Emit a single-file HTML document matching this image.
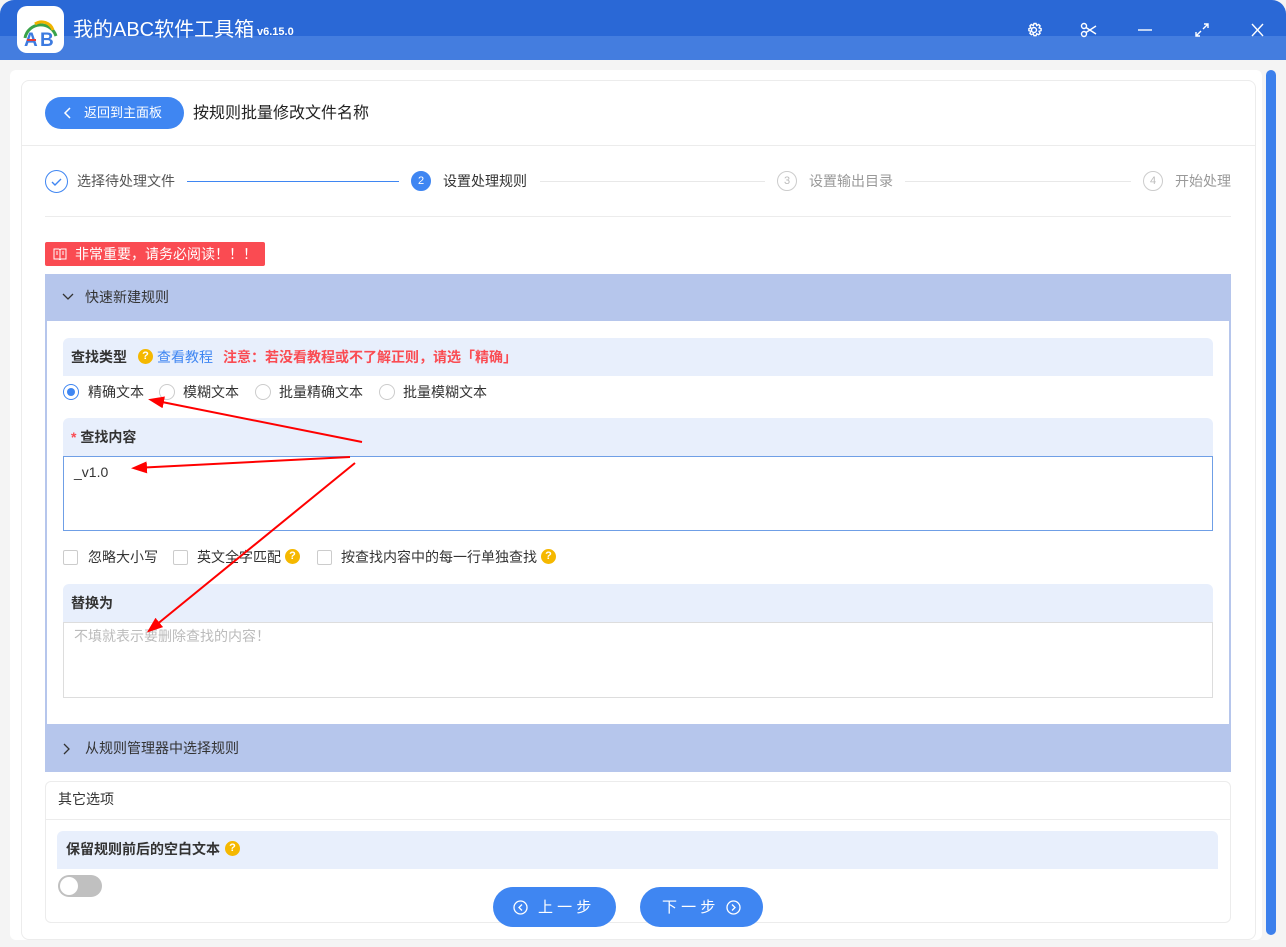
<!DOCTYPE html>
<html><head><meta charset="utf-8"><style>
*{box-sizing:border-box;margin:0;padding:0}
body{width:1286px;height:947px;overflow:hidden;background:#f4f4f4;font-family:"Liberation Sans","Noto Sans CJK SC",sans-serif;font-size:14px;color:#333;position:relative}
.a{position:absolute}
.t{white-space:nowrap;line-height:1}
.rad{position:absolute;width:16px;height:16px;border:1px solid #ccc;border-radius:50%;background:#fff}
.chk{position:absolute;width:15px;height:15px;border:1px solid #ccc;border-radius:2px;background:#fff}
.q{position:absolute;width:15px;height:15px;border-radius:50%;background:#f5b800;color:#fff;font-size:11px;font-weight:bold;text-align:center;line-height:15px}
.step{position:absolute;width:20px;height:20px;border-radius:50%;border:1px solid #ccc;color:#bbb;font-size:11px;text-align:center;line-height:18px}
</style></head><body>
<div class="a" style="left:0;top:0;width:1286px;height:60px;background:#2a68d6;border-radius:14px 14px 0 0"></div>
<div class="a" style="left:0;top:36px;width:1286px;height:24px;background:#447ddf"></div>
<div class="a" style="left:17px;top:6px;width:47px;height:47px;background:#fff;border-radius:10px"></div>
<svg class="a" style="left:17px;top:6px" width="47" height="47"><path d="M8 32 A16 16 0 0 1 39 30" stroke="#3aa34a" stroke-width="3" fill="none"/><path d="M18 18 A12 12 0 0 1 36 24" stroke="#f0b400" stroke-width="3" fill="none"/><text x="7" y="40" font-size="19" font-weight="bold" fill="#3d7be0" font-family="Liberation Sans">A</text><text x="23" y="40" font-size="19" font-weight="bold" fill="#3d7be0" font-family="Liberation Sans">B</text><rect x="10" y="33" width="9" height="2" fill="#e53935"/></svg>
<div class="a t" style="left:73px;top:20px;font-size:20px;color:#fff">我的ABC软件工具箱</div>
<div class="a t" style="left:257px;top:27px;font-size:11px;color:#fff;font-weight:bold">v6.15.0</div>
<svg class="a" style="left:1024px;top:20px" width="240" height="22" fill="none" stroke="#fff" stroke-width="1.4">
<circle cx="10" cy="10" r="2.5"/><path d="M10 3.5 l2 0 .7 2 2-1 1.4 1.4-1 2 2 .7 0 2-2 .7 1 2-1.4 1.4-2-1-.7 2h-2l-.7-2-2 1-1.4-1.4 1-2-2-.7v-2l2-.7-1-2 1.4-1.4 2 1z"/>
<circle cx="60" cy="6" r="2.5"/><circle cx="60" cy="14" r="2.5"/><path d="M62 7.5 L72 14 M62 12.5 L72 6"/>
<path d="M114 10h14"/>
<path d="M172 16l5-5 M179 9l5-5 M180 4h4v4 M172 12v4h4"/>
<path d="M228 4l11 12 M239 4l-11 12"/></svg>
<div class="a" style="left:10px;top:70px;width:1252px;height:870px;background:#fff;border-radius:6px"></div>
<div class="a" style="left:1266px;top:70px;width:10px;height:865px;background:#3c80ec;border-radius:5px"></div>
<div class="a" style="left:21px;top:80px;width:1235px;height:860px;border:1px solid #ececec;border-radius:8px"></div>
<div class="a" style="left:22px;top:145px;width:1233px;height:1px;background:#ececec"></div>
<div class="a" style="left:45px;top:97px;width:139px;height:32px;background:#3f86f2;border-radius:16px"></div>
<svg class="a" style="left:63px;top:106px" width="10" height="14"><path d="M7 2L2 7l5 5" stroke="#fff" stroke-width="1.5" fill="none"/></svg>
<div class="a t" style="left:84px;top:106px;color:#fff;font-size:13px">返回到主面板</div>
<div class="a t" style="left:193px;top:106px;font-size:16px;color:#222">按规则批量修改文件名称</div>
<div class="step" style="left:45px;top:170px;width:23px;height:23px;border-color:#3f86f2"></div>
<svg class="a" style="left:45px;top:170px" width="23" height="23"><path d="M7 12l3 3 6-6" stroke="#3f86f2" stroke-width="1.4" fill="none"/></svg>
<div class="a t" style="left:77px;top:174px;color:#555">选择待处理文件</div>
<div class="a" style="left:187px;top:181px;width:212px;height:1px;background:#3f86f2"></div>
<div class="step" style="left:411px;top:171px;background:#3f86f2;border-color:#3f86f2;color:#fff">2</div>
<div class="a t" style="left:443px;top:174px;color:#333">设置处理规则</div>
<div class="a" style="left:540px;top:181px;width:225px;height:1px;background:#e8e8e8"></div>
<div class="step" style="left:777px;top:171px">3</div>
<div class="a t" style="left:809px;top:174px;color:#999">设置输出目录</div>
<div class="a" style="left:905px;top:181px;width:226px;height:1px;background:#e8e8e8"></div>
<div class="step" style="left:1143px;top:171px">4</div>
<div class="a t" style="left:1175px;top:174px;color:#999">开始处理</div>
<div class="a" style="left:45px;top:216px;width:1186px;height:1px;background:#ececec"></div>
<div class="a" style="left:45px;top:242px;width:220px;height:24px;background:#fa4b52;border-radius:2px"></div>
<svg class="a" style="left:53px;top:248px" width="14" height="12"><path d="M1 1h5l1 1 1-1h5v10H8l-1 1-1-1H1z M7 2v9 M3 4h2M3 6h2M9 4h2M9 6h2" stroke="#fff" fill="none"/></svg>
<div class="a t" style="left:75px;top:247px;color:#fff;font-size:14px">非常重要，请务必阅读！！！</div>
<div class="a" style="left:45px;top:274px;width:1186px;height:498px;background:#b6c6ec"></div>
<svg class="a" style="left:62px;top:293px" width="12" height="8"><path d="M1 1l5 5 5-5" stroke="#333" stroke-width="1.3" fill="none"/></svg>
<div class="a t" style="left:85px;top:290px;color:#333">快速新建规则</div>
<div class="a" style="left:47px;top:321px;width:1182px;height:403px;background:#fff"></div>
<div class="a" style="left:63px;top:338px;width:1150px;height:38px;background:#e8effc;border-radius:6px 6px 0 0"></div>
<div class="a t" style="left:71px;top:350px;font-weight:bold;color:#333">查找类型</div>
<div class="q" style="left:138px;top:349px">?</div>
<div class="a t" style="left:157px;top:350px;color:#3f86f2">查看教程</div>
<div class="a t" style="left:223px;top:350px;color:#fa4b52;font-weight:bold">注意：若没看教程或不了解正则，请选「精确」</div>
<div class="rad" style="left:63px;top:384px;border-color:#3f86f2"></div><div class="a" style="left:67px;top:388px;width:8px;height:8px;border-radius:50%;background:#3f86f2"></div>
<div class="a t" style="left:88px;top:385px">精确文本</div>
<div class="rad" style="left:159px;top:384px"></div><div class="a t" style="left:183px;top:385px">模糊文本</div>
<div class="rad" style="left:255px;top:384px"></div><div class="a t" style="left:279px;top:385px">批量精确文本</div>
<div class="rad" style="left:379px;top:384px"></div><div class="a t" style="left:403px;top:385px">批量模糊文本</div>
<div class="a" style="left:63px;top:418px;width:1150px;height:38px;background:#e8effc;border-radius:6px 6px 0 0"></div>
<div class="a t" style="left:71px;top:430px;font-weight:bold"><span style="color:#fa4b52">*</span> 查找内容</div>
<div class="a" style="left:63px;top:456px;width:1150px;height:75px;border:1px solid #6f9fe6;background:#fff"></div>
<div class="a t" style="left:74px;top:465px;color:#333">_v1.0</div>
<div class="chk" style="left:63px;top:550px"></div><div class="a t" style="left:88px;top:550px">忽略大小写</div>
<div class="chk" style="left:173px;top:550px"></div><div class="a t" style="left:197px;top:550px">英文全字匹配</div><div class="q" style="left:285px;top:549px">?</div>
<div class="chk" style="left:317px;top:550px"></div><div class="a t" style="left:341px;top:550px">按查找内容中的每一行单独查找</div><div class="q" style="left:541px;top:549px">?</div>
<div class="a" style="left:63px;top:584px;width:1150px;height:38px;background:#e8effc;border-radius:6px 6px 0 0"></div>
<div class="a t" style="left:71px;top:596px;font-weight:bold">替换为</div>
<div class="a" style="left:63px;top:622px;width:1150px;height:76px;border:1px solid #ddd;background:#fff"></div>
<div class="a t" style="left:74px;top:629px;color:#bbb">不填就表示要删除查找的内容！</div>
<svg class="a" style="left:63px;top:743px" width="8" height="12"><path d="M1 1l5 5-5 5" stroke="#333" stroke-width="1.3" fill="none"/></svg>
<div class="a t" style="left:85px;top:741px;color:#333">从规则管理器中选择规则</div>
<div class="a" style="left:45px;top:781px;width:1186px;height:142px;border:1px solid #ececec;border-radius:6px;background:#fff"></div>
<div class="a t" style="left:58px;top:792px">其它选项</div>
<div class="a" style="left:46px;top:819px;width:1184px;height:1px;background:#ececec"></div>
<div class="a" style="left:57px;top:831px;width:1161px;height:38px;background:#e8effc;border-radius:6px 6px 0 0"></div>
<div class="a t" style="left:66px;top:842px;font-weight:bold">保留规则前后的空白文本</div><div class="q" style="left:225px;top:841px">?</div>
<div class="a" style="left:58px;top:875px;width:44px;height:22px;border-radius:11px;background:#c0c0c0"></div>
<div class="a" style="left:60px;top:877px;width:18px;height:18px;border-radius:50%;background:#fff"></div>
<div class="a" style="left:493px;top:887px;width:123px;height:40px;background:#3f86f2;border-radius:20px"></div>
<svg class="a" style="left:513px;top:900px" width="15" height="15"><circle cx="7.5" cy="7.5" r="6.5" stroke="#fff" stroke-width="1.3" fill="none"/><path d="M9 4.5L6 7.5l3 3" stroke="#fff" stroke-width="1.3" fill="none"/></svg>
<div class="a t" style="left:538px;top:900px;color:#fff;font-size:15px">上 一 步</div>
<div class="a" style="left:640px;top:887px;width:123px;height:40px;background:#3f86f2;border-radius:20px"></div>
<div class="a t" style="left:662px;top:900px;color:#fff;font-size:15px">下 一 步</div>
<svg class="a" style="left:726px;top:900px" width="15" height="15"><circle cx="7.5" cy="7.5" r="6.5" stroke="#fff" stroke-width="1.3" fill="none"/><path d="M6 4.5L9 7.5l-3 3" stroke="#fff" stroke-width="1.3" fill="none"/></svg>
<svg class="a" style="left:0;top:0" width="1286" height="947">
<defs><marker id="m" markerWidth="8" markerHeight="6" refX="6" refY="3" orient="auto"><path d="M0 0L8 3L0 6z" fill="#f00"/></marker></defs>
<g stroke="#f00" stroke-width="2" fill="none" marker-end="url(#m)">
<path d="M362 442L152 400"/><path d="M350 457L135 468"/><path d="M355 463L150 630"/></g></svg>
</body></html>
